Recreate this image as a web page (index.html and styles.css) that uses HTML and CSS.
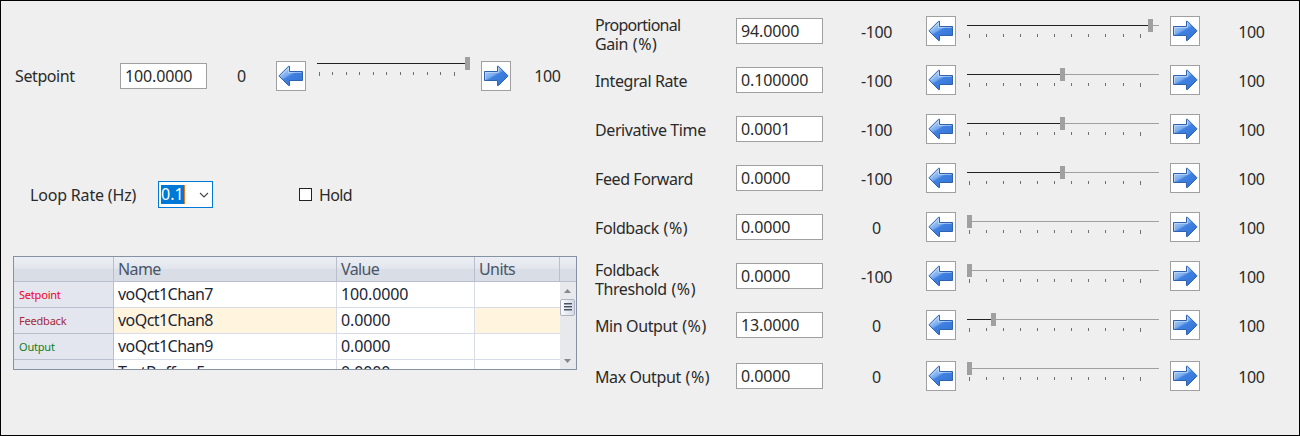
FILE: index.html
```html
<!DOCTYPE html>
<html lang="en">
<head>
<meta charset="utf-8">
<title>PID Control</title>
<link rel="stylesheet" href="styles.css">
</head>
<body>
<svg class="defs" width="0" height="0">
  <defs>
    <linearGradient id="blue" x1="0" y1="0" x2="0.7" y2="1">
      <stop offset="0.15" stop-color="#b4d2f7"/>
      <stop offset="0.48" stop-color="#78abee"/>
      <stop offset="0.56" stop-color="#3f80e0"/>
      <stop offset="1" stop-color="#3474d4"/>
    </linearGradient>
    <symbol id="right" viewBox="0 0 28 28">
      <path d="M2.5 9.5H15.5V4.2H16.4L25.8 13.6V14.2L16.4 23.6H15.5V18.5H2.5Z" fill="url(#blue)" stroke="#2f62ae"/>
      <path d="M3.5 17.5V10.5H16.5V6" fill="none" stroke="#cfe2fb" stroke-opacity=".6"/>
    </symbol>
    <symbol id="left" viewBox="0 0 28 28">
      <path d="M25.5 9.5H12.5V4.2H11.6L2.2 13.6V14.2L11.6 23.6H12.5V18.5H25.5Z" fill="url(#blue)" stroke="#2f62ae"/>
      <path d="M24.5 10.5H11.5V6L3.8 13.8" fill="none" stroke="#cfe2fb" stroke-opacity=".6"/>
    </symbol>
    <symbol id="ticks" viewBox="0 0 192 4">
      <path d="M2.5 0V4M19.5 0V3M36.5 0V3M53.5 0V3M70.5 0V3M87.5 0V3M104.5 0V3M121.5 0V3M138.5 0V3M156.5 0V3M173.5 0V4" stroke="#707070"/>
    </symbol>
  </defs>
</svg>
<main class="panel">
  <section class="left">
    <div class="row setpoint">
      <span class="label">Setpoint</span>
      <span class="field">100.0000</span>
      <span class="min">0</span>
      <span class="btn"><svg><use href="#left"/></svg></span>
      <div class="slider"><div class="track"><i class="fill" style="width:150px"></i><i class="thumb" style="left:148px"></i></div>
        <svg class="ticks" viewBox="0 0 153 4"><path d="M2.5 0V4M15.5 0V3M29.5 0V3M42.5 0V3M56.5 0V3M69.5 0V3M83.5 0V3M96.5 0V3M110.5 0V3M123.5 0V3M137.5 0V4" stroke="#707070"/></svg></div>
      <span class="btn"><svg><use href="#right"/></svg></span>
      <span class="max">100</span>
    </div>
    <div class="loop">
      <span class="looplabel">Loop Rate (Hz)</span>
      <span class="combo"><span class="selected">0.1</span><svg width="10" height="6" viewBox="0 0 10 6"><path d="M1 1L5 5L9 1" fill="none" stroke="#444" stroke-width="1.1"/></svg></span>
      <span class="check"></span><span class="hold">Hold</span>
    </div>
    <div class="table">
      <div class="thead"><span></span><span>Name</span><span>Value</span><span>Units</span><span></span></div>
      <div class="tbody">
        <div class="rows">
          <div class="tr"><span class="key red">Setpoint</span><span>voQct1Chan7</span><span class="value">100.0000</span><span></span></div>
          <div class="tr hl"><span class="key maroon">Feedback</span><span>voQct1Chan8</span><span class="value plain">0.0000</span><span></span></div>
          <div class="tr"><span class="key green">Output</span><span>voQct1Chan9</span><span class="value">0.0000</span><span></span></div>
          <div class="tr"><span class="key"></span><span>TestBuffer_5</span><span class="value">0.0000</span><span></span></div>
        </div>
        <div class="scroll">
          <svg width="7" height="4" viewBox="0 0 7 4"><path d="M0 4L3.5 0L7 4Z" fill="#85878f"/></svg>
          <div class="grip"><i></i><i></i><i></i></div>
          <svg class="down" width="7" height="4" viewBox="0 0 7 4"><path d="M0 0L3.5 4L7 0Z" fill="#85878f"/></svg>
        </div>
      </div>
    </div>
  </section>
  <section class="right">
    <div class="row"><span class="label double"><span class="tight">Proportional</span><br>Gain <span class="unit">(%)</span></span><span class="field">94.0000</span><span class="min">-100</span><span class="btn"><svg><use href="#left"/></svg></span><div class="slider"><div class="track"><i class="fill" style="width:181px"></i><i class="thumb" style="left:181px"></i></div><svg class="ticks"><use href="#ticks"/></svg></div><span class="btn"><svg><use href="#right"/></svg></span><span class="max">100</span></div>
    <div class="row"><span class="label">Integral Rate</span><span class="field">0.100000</span><span class="min">-100</span><span class="btn"><svg><use href="#left"/></svg></span><div class="slider"><div class="track"><i class="fill" style="width:93px"></i><i class="thumb" style="left:93px"></i></div><svg class="ticks"><use href="#ticks"/></svg></div><span class="btn"><svg><use href="#right"/></svg></span><span class="max">100</span></div>
    <div class="row"><span class="label">Derivative Time</span><span class="field">0.0001</span><span class="min">-100</span><span class="btn"><svg><use href="#left"/></svg></span><div class="slider"><div class="track"><i class="fill" style="width:93px"></i><i class="thumb" style="left:93px"></i></div><svg class="ticks"><use href="#ticks"/></svg></div><span class="btn"><svg><use href="#right"/></svg></span><span class="max">100</span></div>
    <div class="row"><span class="label">Feed Forward</span><span class="field">0.0000</span><span class="min">-100</span><span class="btn"><svg><use href="#left"/></svg></span><div class="slider"><div class="track"><i class="fill" style="width:93px"></i><i class="thumb" style="left:93px"></i></div><svg class="ticks"><use href="#ticks"/></svg></div><span class="btn"><svg><use href="#right"/></svg></span><span class="max">100</span></div>
    <div class="row"><span class="label">Foldback <span class="unit">(%)</span></span><span class="field">0.0000</span><span class="min">0</span><span class="btn"><svg><use href="#left"/></svg></span><div class="slider"><div class="track"><i class="thumb" style="left:0px"></i></div><svg class="ticks"><use href="#ticks"/></svg></div><span class="btn"><svg><use href="#right"/></svg></span><span class="max">100</span></div>
    <div class="row"><span class="label double">Foldback<br>Threshold <span class="unit">(%)</span></span><span class="field">0.0000</span><span class="min">-100</span><span class="btn"><svg><use href="#left"/></svg></span><div class="slider"><div class="track"><i class="thumb" style="left:0px"></i></div><svg class="ticks"><use href="#ticks"/></svg></div><span class="btn"><svg><use href="#right"/></svg></span><span class="max">100</span></div>
    <div class="row"><span class="label">Min Output <span class="unit">(%)</span></span><span class="field">13.0000</span><span class="min">0</span><span class="btn"><svg><use href="#left"/></svg></span><div class="slider"><div class="track"><i class="fill" style="width:24px"></i><i class="thumb" style="left:24px"></i></div><svg class="ticks"><use href="#ticks"/></svg></div><span class="btn"><svg><use href="#right"/></svg></span><span class="max">100</span></div>
    <div class="row last"><span class="label">Max Output <span class="unit">(%)</span></span><span class="field">0.0000</span><span class="min">0</span><span class="btn"><svg><use href="#left"/></svg></span><div class="slider"><div class="track"><i class="thumb" style="left:0px"></i></div><svg class="ticks"><use href="#ticks"/></svg></div><span class="btn"><svg><use href="#right"/></svg></span><span class="max">100</span></div>
  </section>
</main>
</body>
</html>
```
FILE: styles.css
```css
* { box-sizing: border-box; }
body { margin: 0; font: 16px/19px "Noto Sans", sans-serif; letter-spacing: -0.4px; color: #2a2a2a; white-space: nowrap; }
.defs { display: block; }
svg { display: block; flex: none; }
.panel { display: grid; grid-template-columns: 594px 1fr; width: 1300px; height: 436px; border: 1px solid #000; background: #efefef; overflow: hidden; }
.right { display: flex; flex-direction: column; gap: 19px; padding-top: 15px; }
.row { display: grid; grid-template-columns: 141px 87px 103px 30px 11px 192px 11px 30px 103px; grid-template-rows: 30px; height: 30px; flex: none; align-items: center; }
.row .slider { grid-column: 6; }
.row .slider + .btn { grid-column: 8; }
.row.last { margin-top: 2px; }
.last .slider { margin-top: -2px; }
.label, .max { padding-top: 2px; }
.double { padding-top: 8px; }
.tight { letter-spacing: -0.75px; }
.unit { letter-spacing: 0.6px; margin-left: 1px; }
.min, .max { text-align: center; padding-top: 2px; }
.min { padding-left: 4px; }
.field { height: 26px; padding: 3px 0 0 4px; line-height: 19px; letter-spacing: -0.15px; border: 1px solid #a0a0a0; background: #fff; }
.btn { width: 30px; height: 30px; border: 1px solid #a0a0a0; background: #fff; }
.btn svg { width: 28px; height: 28px; }
.slider { height: 22px; align-self: start; padding-top: 9px; }
.track { position: relative; height: 1px; background: #a0a0a0; }
.fill { display: block; height: 1px; background: #222; }
.thumb { position: absolute; top: -6px; width: 5px; height: 13px; background: #a0a0a0; }
.ticks { width: 192px; height: 4px; margin-top: 8px; }

.left { display: flex; flex-direction: column; align-items: flex-start; padding: 60px 0 0 12px; }
.setpoint { grid-template-columns: 107px 87px 69px 30px 11px 153px 11px 30px 75px; }
.setpoint .label { padding: 0 0 0 2px; }
.setpoint .min { padding: 0; }
.setpoint .max { padding: 0 2px 0 0; }
.setpoint .slider { padding-top: 2px; }
.setpoint .track { width: 153px; background: none; }
.setpoint .ticks { width: 153px; }
.loop { display: flex; align-items: center; height: 27px; margin-top: 90px; }
.looplabel { width: 128px; padding-left: 17px; letter-spacing: -0.18px; }
.looplabel, .hold { padding-top: 1px; }
.combo { display: flex; align-items: center; justify-content: space-between; width: 55px; height: 27px; margin-left: 17px; padding: 0 3px 0 2px; border: 1px solid #0078d7; background: #fff; }
.selected { width: 24px; height: 19px; letter-spacing: 0; line-height: 18px; background: #0078d7; color: #fff; border-right: 1px solid #e87b1e; }
.check { width: 13px; height: 13px; margin-left: 86px; border: 1px solid #222; background: #fff; }
.hold { margin-left: 7px; letter-spacing: -0.6px; }

.table { width: 564px; height: 114px; margin-top: 48px; border: 1px solid #8592a3; background: #fff; overflow: hidden; }
.thead, .tr { display: grid; }
.thead { grid-template-columns: 100px 223px 138px 85px 1fr; height: 25px; background: linear-gradient(#eceff4 0, #e2e5ec 50%, #d9dde6 50%, #d9dde6 100%); color: #4a5569; letter-spacing: -0.6px; border-bottom: 1px solid #b9bfcd; }
.thead span { padding: 3px 0 0 4px; border-right: 1px solid #b9bfcd; }
.thead span:last-child { border: 0; }
.tbody { display: grid; grid-template-columns: 546px 16px; height: 87px; }
.rows { height: 87px; overflow: hidden; }
.tr { grid-template-columns: 100px 223px 138px 85px; height: 26px; color: #1a2536; letter-spacing: -0.55px; }
.tr span { padding: 3px 0 0 4px; border-right: 1px solid #d8dce6; border-bottom: 1px solid #d8dce6; }
.tr span:last-child { border-right: 0; }
.tr .value { letter-spacing: -0.12px; }
.tr .key { padding: 3px 0 0 5px; font-size: 11px; letter-spacing: -0.2px; background: #e3e6ee; border-color: #b9bfcd; }
.hl span { background: #fff5df; }
.hl .plain { background: #fff; }
.red { color: #f00020; }
.maroon { color: #a52a3a; }
.green { color: #108020; }
.scroll { display: flex; flex-direction: column; align-items: center; padding: 7px 1px 0 0; background: #e8e9ec; }
.grip { display: flex; flex-direction: column; align-items: center; gap: 1px; width: 15px; height: 17px; margin-top: 6px; padding-top: 3px; border: 1px solid #adb3c2; border-radius: 2px; background: linear-gradient(90deg, #fafbfd, #d5dae5); }
.grip i { width: 8px; height: 2px; background: #4b5263; border-bottom: 1px solid #9ba2b3; }
.down { margin-top: 43px; }
```
